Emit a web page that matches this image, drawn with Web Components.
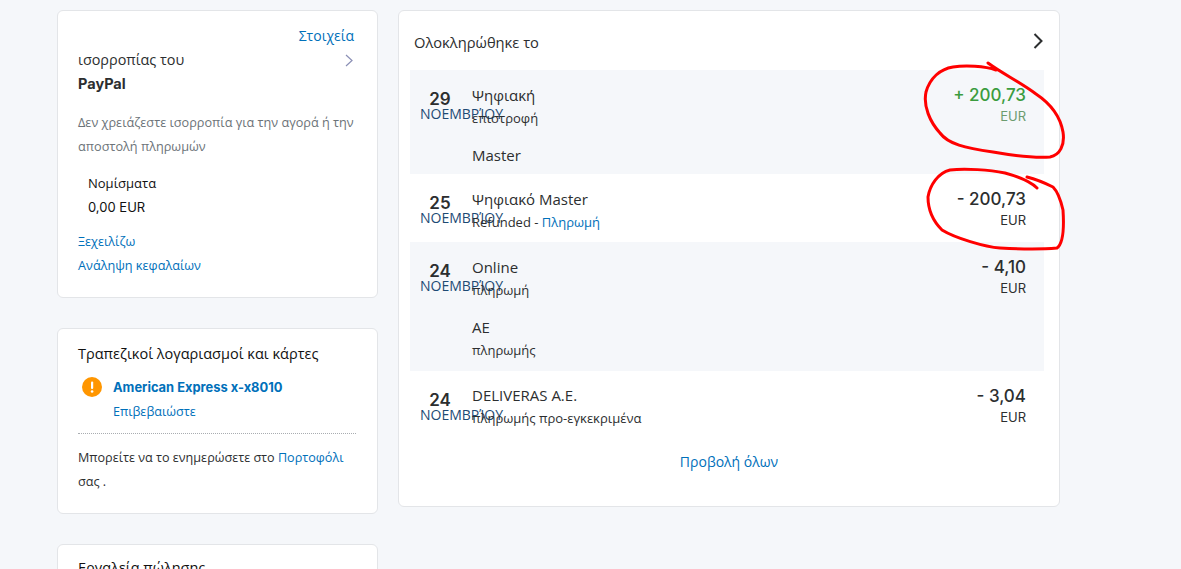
<!DOCTYPE html>
<html lang="el">
<head>
<meta charset="utf-8">
<title>PayPal</title>
<style>
	html, body { margin: 0; height: 569px; overflow: hidden; }
	body { background: #f5f7fa; font-family: "Open Sans", "Noto Sans", sans-serif; color: #2c2e2f; }
	activity-row a { color: #0070ba; }
</style>
</head>
<body>
<pp-page>
	<balance-card slot="left"></balance-card>
	<bank-card slot="left"></bank-card>
	<tools-card slot="left"></tools-card>
	<activity-card slot="right">
		<activity-row day="29" amount="+ 200,73" tone="in" shaded>
			<span slot="title">Ψηφιακή</span>
			<span slot="sub">επιστροφή</span>
			<span slot="title2">Master</span>
		</activity-row>
		<activity-row day="25" amount="- 200,73">
			<span slot="title">Ψηφιακό Master</span>
			<span slot="sub">Refunded - <a>Πληρωμή</a></span>
		</activity-row>
		<activity-row day="24" amount="- 4,10" shaded>
			<span slot="title">Online</span>
			<span slot="sub">πληρωμή</span>
			<span slot="title2">ΑΕ</span>
			<span slot="sub2">πληρωμής</span>
		</activity-row>
		<activity-row day="24" amount="- 3,04" lift>
			<span slot="title">DELIVERAS A.E.</span>
			<span slot="sub">πληρωμής προ-εγκεκριμένα</span>
		</activity-row>
	</activity-card>
</pp-page>
<red-scribble></red-scribble>

<script>
"use strict";

(function() {
	const cardStyle = `
		:host {
			display: block;
			box-sizing: border-box;
			background: #fff;
			border: 1px solid #e3e5e8;
			border-radius: 6px;
		}
		a { color: #0070ba; text-decoration: none; }
	`;

	function define(name, template, setup) {
		customElements.define(name, class extends HTMLElement {
			constructor() {
				super();
				this.attachShadow({mode: "open"}).innerHTML = template;
				if (setup) setup(this);
			}
		});
	}

	define("pp-page", `
		<style>
			:host { display: flex; gap: 20px; align-items: flex-start; box-sizing: border-box; height: 569px; overflow: hidden; padding: 10px 0 0 57px; }
			.left { display: flex; flex-direction: column; gap: 30px; width: 321px; flex: none; }
			.right { width: 662px; flex: none; }
		</style>
		<div class="left"><slot name="left"></slot></div>
		<div class="right"><slot name="right"></slot></div>
	`);

	define("balance-card", `
		<style>
			${cardStyle}
			:host { height: 288px; padding: 13px 20px 0 20px; font-size: 13px; }
			.head { display: flex; justify-content: space-between; margin-right: 3px; }
			.title { font-size: 14.400px; line-height: 24px; padding-top: 24px; }
			.title b { display: block; font-family: Inter, sans-serif; font-size: 14.500px; font-weight: 700; }
			.more { display: flex; flex-direction: column; align-items: flex-end; font-size: 14px; line-height: 24px; }
			.note { color: #6c7378; font-size: 12.700px; line-height: 23.500px; margin-top: 15px; }
			.cur { color: #111; font-size: 13px; line-height: 24px; padding-left: 10px; margin-top: 13px; }
			.cur span { font-family: Inter, sans-serif; }
			.links { margin-top: 10px; font-size: 12.700px; line-height: 24px; }
			.links a { display: block; }
			svg { display: block; margin: 6px 1px 0 0; }
		</style>
		<div class="head">
			<div class="title">ισορροπίας του<b>PayPal</b></div>
			<a class="more">Στοιχεία
				<svg width="8" height="13" viewBox="0 0 8 13"><path d="M1 1l6 5.500-6 5.500" fill="none" stroke="#8a8fb5" stroke-width="1.200"/></svg>
			</a>
		</div>
		<div class="note">Δεν χρειάζεστε ισορροπία για την αγορά ή την αποστολή πληρωμών</div>
		<div class="cur">Νομίσματα<br><span>0,00 EUR</span></div>
		<div class="links"><a>Ξεχειλίζω</a><a>Ανάληψη κεφαλαίων</a></div>
	`);

	define("bank-card", `
		<style>
			${cardStyle}
			:host { height: 186px; padding: 13px 21px 0 20px; font-size: 12.600px; }
			.title { font-size: 14.500px; line-height: 24px; color: #111; }
			.acct { display: flex; gap: 11px; margin: 10px 0 0 4px; line-height: 24px; }
			.acct svg { flex: none; margin-top: 1px; }
			.acct b { display: block; font-family: Inter, sans-serif; font-size: 12.900px; font-weight: 700; }
			.foot { border-top: 1px dotted #a9adb1; margin-top: 9px; padding-top: 12px; line-height: 24px; }
		</style>
		<div class="title">Τραπεζικοί λογαριασμοί και κάρτες</div>
		<div class="acct">
			<svg width="20" height="20" viewBox="0 0 20 20"><circle cx="10" cy="10" r="10" fill="#ff9600"/><rect x="9" y="4.500" width="2.200" height="7.500" rx="1" fill="#fff"/><circle cx="10.100" cy="14.500" r="1.300" fill="#fff"/></svg>
			<div><a><b>American Express x-x8010</b></a><a>Επιβεβαιώστε</a></div>
		</div>
		<div class="foot">Μπορείτε να το ενημερώσετε στο <a>Πορτοφόλι</a> σας .</div>
	`);

	define("tools-card", `
		<style>
			${cardStyle}
			:host { height: 120px; padding: 11px 20px 0; font-size: 14.500px; line-height: 24px; color: #111; }
		</style>
		Εργαλεία πώλησης
	`);

	define("activity-card", `
		<style>
			${cardStyle}
			:host { height: 497px; padding: 0 15px 0 11px; }
			.head { display: flex; justify-content: space-between; align-items: center; height: 59px; padding: 0 1px 0 4px; box-sizing: border-box; font-size: 14.700px; }
			.head span { position: relative; top: 1px; }
			.foot { text-align: center; margin-top: 11px; font-size: 14px; line-height: 24px; padding-left: 4px; }
		</style>
		<div class="head"><span>Ολοκληρώθηκε το</span>
			<svg width="10" height="16" viewBox="0 0 10 16"><path d="M1.500 1l7 7-7 7" fill="none" stroke="#2c2e2f" stroke-width="2"/></svg>
		</div>
		<slot></slot>
		<div class="foot"><a>Προβολή όλων</a></div>
	`);

	define("activity-row", `
		<style>
			:host { display: flex; padding: 15px 18px 7px 10px; font-size: 13px; }
			:host([shaded]) { background: #f5f7fa; }
			:host([lift]) .body { margin: -1px 0 1px; }
			.date { width: 40px; flex: none; margin-right: 12px; padding-top: 3px; white-space: nowrap; }
			.day { text-align: center; font-family: Inter, sans-serif; font-size: 17px; font-weight: 600; line-height: 22px; }
			.month { font-size: 14px; line-height: 16px; color: #1d4a74; margin-top: -4px; }
			.body { flex: 1; }
			.t { display: block; font-size: 15px; line-height: 21px; }
			.s { display: block; line-height: 25px; }
			.second { margin: 14px 0 1px; }
			.second.none { display: none; }
			.amount { text-align: right; font-family: Inter, sans-serif; }
			.value { font-size: 17px; line-height: 21px; font-weight: 500; }
			.cur { font-size: 13px; line-height: 20px; }
			:host([tone=in]) .value { color: #3b9c3f; }
			:host([tone=in]) .cur { color: #6c9c6f; }
		</style>
		<div class="date"><div class="day"></div><div class="month">ΝΟΕΜΒΡΊΟΥ</div></div>
		<div class="body">
			<span class="t"><slot name="title"></slot></span>
			<span class="s"><slot name="sub"></slot></span>
			<div class="second">
				<span class="t"><slot name="title2"></slot></span>
				<span class="s"><slot name="sub2"></slot></span>
			</div>
		</div>
		<div class="amount"><div class="value"></div><div class="cur">EUR</div></div>
	`, function(el) {
		const root = el.shadowRoot;
		root.querySelector(".day").textContent = el.getAttribute("day");
		root.querySelector(".value").textContent = el.getAttribute("amount");
		const second = root.querySelector(".second");
		if (!el.querySelector("[slot=title2]")) second.classList.add("none");
	});

	// hand drawn marks over the page
	define("red-scribble", `
		<style>
			:host { position: absolute; left: 0; top: 0; width: 1181px; height: 569px; pointer-events: none; }
			path { fill: none; stroke: #f00; stroke-width: 3; stroke-linecap: round; stroke-linejoin: round; }
		</style>
		<svg width="1181" height="569">
			<path d="M996 70C985 66 965 65 953 67C940 69 930 78 926 92C923 106 930 122 940 133C948 144 965 148 993 152C1010 155 1035 158 1050 157C1060 155 1065 145 1063 132C1060 115 1048 102 1036 94C1020 82 1003 74 988 63"/>
			<path d="M1037 188C1030 181 1020 177 1005 173C990 170 965 168 950 170C938 173 930 185 928 197C928 212 934 222 942 230C955 238 985 247 1000 248C1020 249 1045 249 1057 248C1064 243 1064 225 1063 210C1060 197 1056 190 1053 187C1045 183 1035 179 1027 177"/>
		</svg>
	`);
})();
</script>
</body>
</html>
